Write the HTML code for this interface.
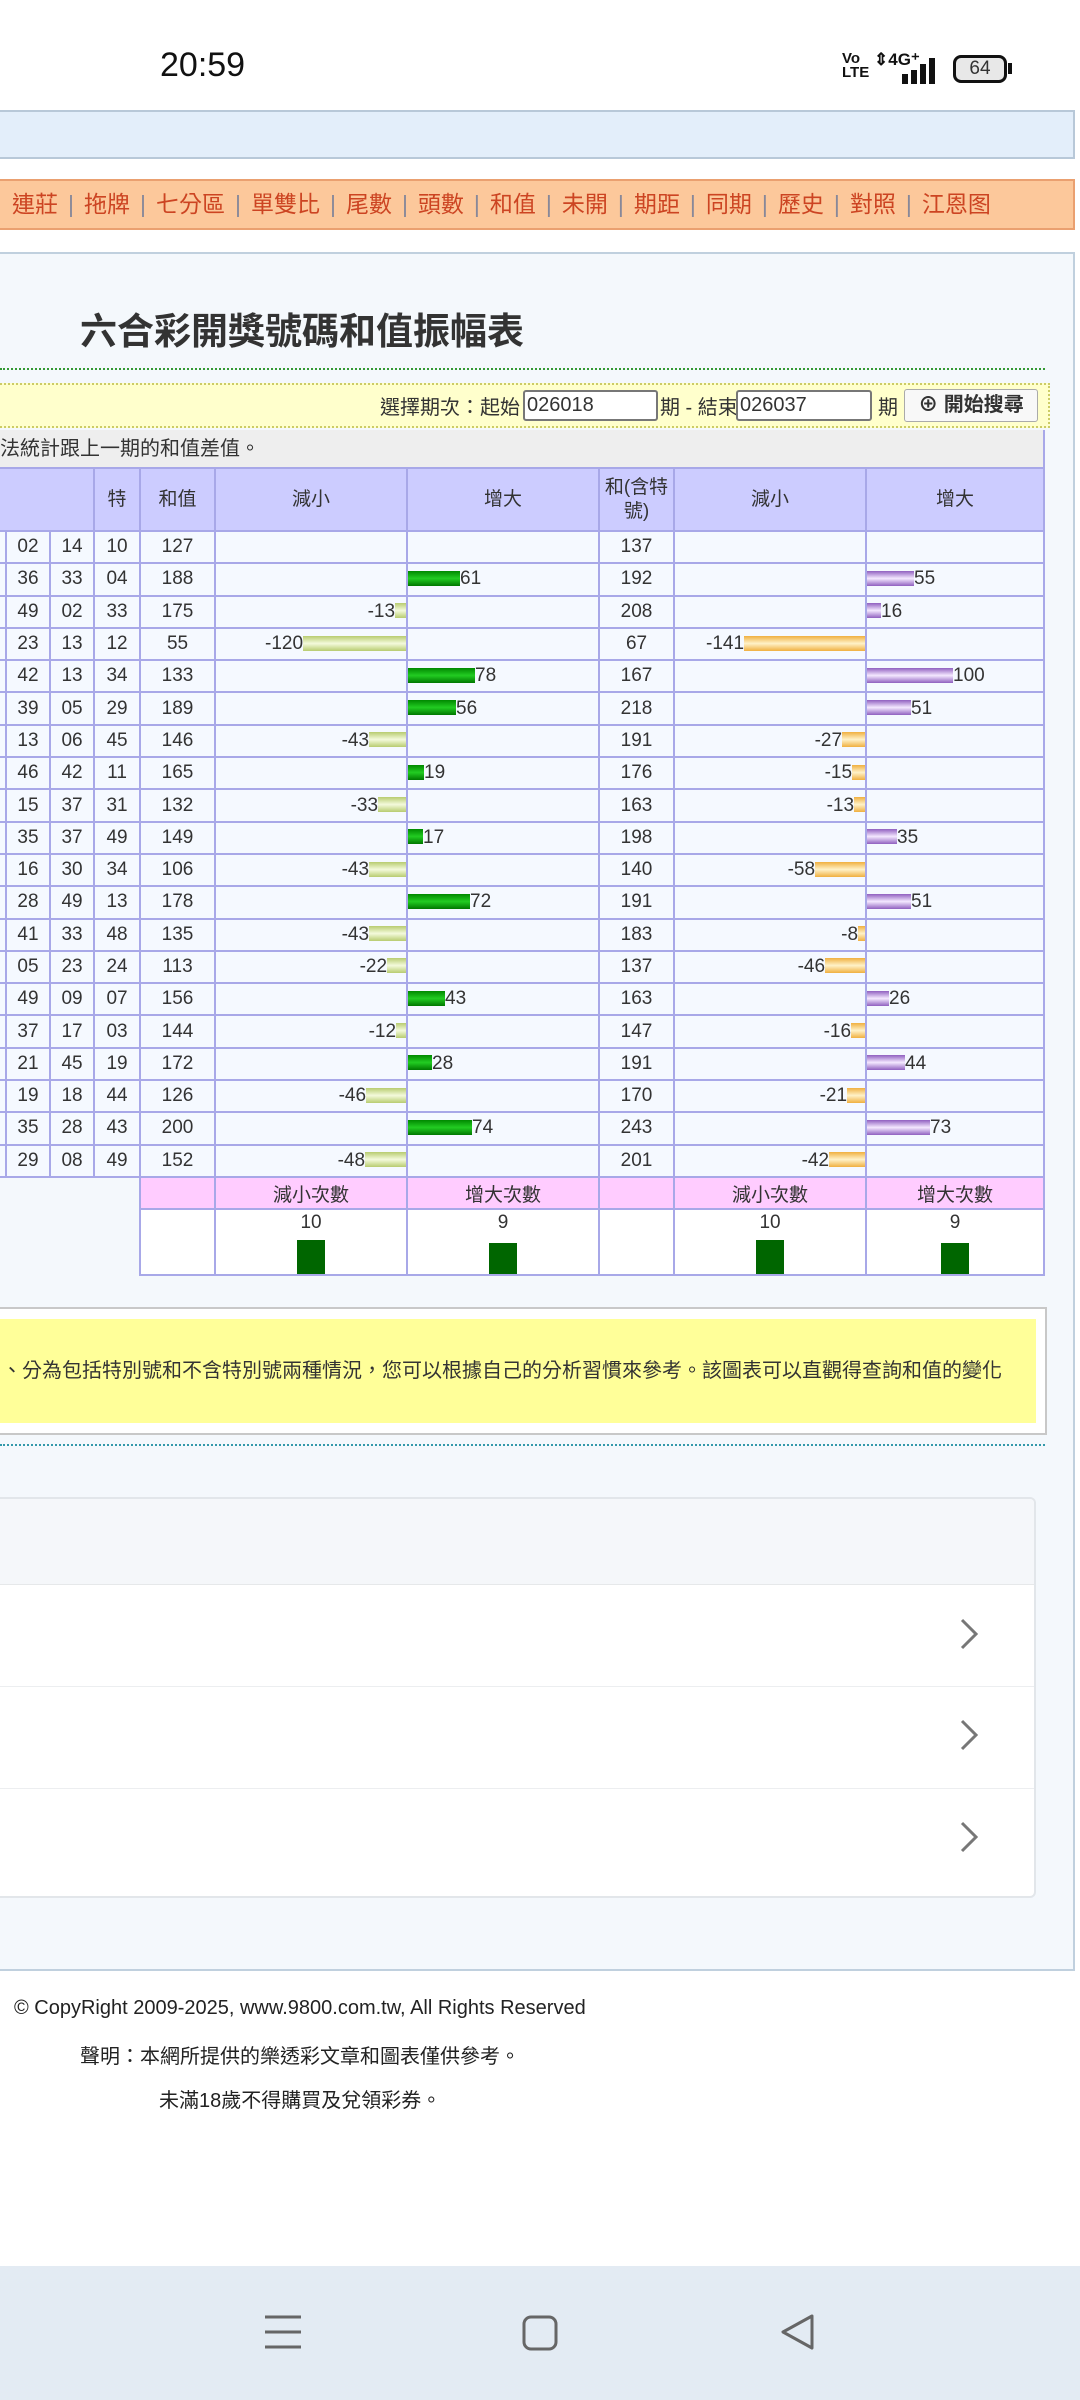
<!DOCTYPE html>
<html><head><meta charset="utf-8"><style>
*{margin:0;padding:0;box-sizing:border-box}
body{width:1080px;height:2400px;position:relative;overflow:hidden;background:#fff;font-family:"Liberation Sans","Noto Sans CJK TC",sans-serif;color:#333}
.abs{position:absolute}
table{border-collapse:collapse;table-layout:fixed;position:absolute;left:-39px;top:467px;width:1082px}
td{border:2px solid #a8a8e8;background:#f5f9ff;font-size:19px;text-align:center;height:32.3px;padding:0;white-space:nowrap;overflow:hidden}
tr.h td{background:#ccccff;height:63px;font-size:19px;line-height:24px}
td.d{text-align:right}
td.i{text-align:left}
.b{display:inline-block;height:15px;vertical-align:middle;position:relative;top:-1px}
.g{background:linear-gradient(#008800,#22cc22 50%,#007700)}
.y{background:linear-gradient(#b8cc70,#f4fadc 50%,#b8cc70)}
.o{background:linear-gradient(#f0b040,#fff2c8 50%,#f0b040)}
.p{background:linear-gradient(#9060c0,#f4e8ff 50%,#9060c0)}
tr.pk td.k{background:#ffccff}
.sq{display:inline-block;width:28px;background:#006600;vertical-align:bottom}
.nav span{color:#cc4422}
.nav i{color:#889;font-style:normal;margin:0 10px}
</style></head><body>
<div class="abs" style="left:160px;top:46px;font-size:34px;color:#111">20:59</div>
<div class="abs" style="left:842px;top:52px;font-size:15px;font-weight:bold;line-height:14px;color:#111">Vo<br>LTE</div>
<div class="abs" style="left:874px;top:50px;font-size:17px;font-weight:bold;color:#111">⇕4G⁺</div>
<svg class="abs" style="left:900px;top:54px" width="40" height="32"><rect x="2" y="20" width="6" height="10" fill="#111"/><rect x="11" y="16" width="6" height="14" fill="#111"/><rect x="20" y="10" width="6" height="20" fill="#111"/><rect x="29" y="4" width="6" height="26" fill="#111"/></svg>
<div class="abs" style="left:953px;top:55px;width:54px;height:28px;border:3px solid #111;border-radius:8px;background:#e8e8e8;font-size:19px;text-align:center;line-height:22px">64</div>
<div class="abs" style="left:1008px;top:63px;width:4px;height:11px;background:#111"></div>
<div class="abs" style="left:-5px;top:110px;width:1080px;height:49px;background:#e3eefa;border:2px solid #b8c8d8"></div>
<div class="abs nav" style="left:-5px;top:179px;width:1080px;height:51px;background:#fcc89b;border:2px solid #eaa070;font-size:23px;line-height:47px;padding-left:15px;white-space:nowrap"><span>連莊</span><i>|</i><span>拖牌</span><i>|</i><span>七分區</span><i>|</i><span>單雙比</span><i>|</i><span>尾數</span><i>|</i><span>頭數</span><i>|</i><span>和值</span><i>|</i><span>未開</span><i>|</i><span>期距</span><i>|</i><span>同期</span><i>|</i><span>歷史</span><i>|</i><span>對照</span><i>|</i><span>江恩图</span></div>
<div class="abs" style="left:-5px;top:252px;width:1080px;height:1719px;background:#f4f8fc;border:2px solid #c0d0de"></div>
<div class="abs" style="left:80px;top:301px;font-size:37px;font-weight:bold;color:#333">六合彩開獎號碼和值振幅表</div>
<div class="abs" style="left:0;top:368px;width:1045px;border-top:2px dotted #339933"></div>
<div class="abs" style="left:-5px;top:383px;width:1055px;height:45px;background:#ffffcc;border:2px dotted #cccc66"></div>
<div class="abs" style="left:380px;top:391px;font-size:20px;color:#333;white-space:nowrap">選擇期次：起始</div>
<div class="abs" style="left:523px;top:390px;width:135px;height:31px;background:#fff;border:2px solid #777;border-radius:3px;font-size:20px;line-height:27px;padding-left:2px">026018</div>
<div class="abs" style="left:660px;top:391px;font-size:20px;white-space:nowrap">期 - 結束</div>
<div class="abs" style="left:736px;top:390px;width:136px;height:31px;background:#fff;border:2px solid #777;border-radius:3px;font-size:20px;line-height:27px;padding-left:2px">026037</div>
<div class="abs" style="left:878px;top:391px;font-size:20px">期</div>
<div class="abs" style="left:904px;top:389px;width:134px;height:33px;background:#f8f8f8;border:1px solid #aaa;border-radius:3px;font-size:20px;font-weight:bold;line-height:31px;text-align:center">⊕ 開始搜尋</div>
<div class="abs" style="left:-5px;top:430px;width:1050px;height:38px;background:#eeeeee;border-right:2px solid #a8a8e8;font-size:20px;line-height:38px;padding-left:5px">法統計跟上一期的和值差值。</div>
<table>
<colgroup><col style="width:44px"><col style="width:44px"><col style="width:44px"><col style="width:46px"><col style="width:75px"><col style="width:192px"><col style="width:192px"><col style="width:75px"><col style="width:192px"><col style="width:178px"></colgroup>
<tr class="h"><td colspan="3"></td><td>特</td><td>和值</td><td>減小</td><td>增大</td><td>和(含特<br>號)</td><td>減小</td><td>增大</td></tr>
<tr><td>08</td><td>02</td><td>14</td><td>10</td><td>127</td><td></td><td></td><td>137</td><td></td><td></td></tr>
<tr><td>20</td><td>36</td><td>33</td><td>04</td><td>188</td><td></td><td class="i"><span class="b g" style="width:52px"></span>61</td><td>192</td><td></td><td class="i"><span class="b p" style="width:47px"></span>55</td></tr>
<tr><td>11</td><td>49</td><td>02</td><td>33</td><td>175</td><td class="d">-13<span class="b y" style="width:11px"></span></td><td></td><td>208</td><td></td><td class="i"><span class="b p" style="width:14px"></span>16</td></tr>
<tr><td>05</td><td>23</td><td>13</td><td>12</td><td>55</td><td class="d">-120<span class="b y" style="width:103px"></span></td><td></td><td>67</td><td class="d">-141<span class="b o" style="width:121px"></span></td><td></td></tr>
<tr><td>18</td><td>42</td><td>13</td><td>34</td><td>133</td><td></td><td class="i"><span class="b g" style="width:67px"></span>78</td><td>167</td><td></td><td class="i"><span class="b p" style="width:86px"></span>100</td></tr>
<tr><td>31</td><td>39</td><td>05</td><td>29</td><td>189</td><td></td><td class="i"><span class="b g" style="width:48px"></span>56</td><td>218</td><td></td><td class="i"><span class="b p" style="width:44px"></span>51</td></tr>
<tr><td>27</td><td>13</td><td>06</td><td>45</td><td>146</td><td class="d">-43<span class="b y" style="width:37px"></span></td><td></td><td>191</td><td class="d">-27<span class="b o" style="width:23px"></span></td><td></td></tr>
<tr><td>30</td><td>46</td><td>42</td><td>11</td><td>165</td><td></td><td class="i"><span class="b g" style="width:16px"></span>19</td><td>176</td><td class="d">-15<span class="b o" style="width:13px"></span></td><td></td></tr>
<tr><td>09</td><td>15</td><td>37</td><td>31</td><td>132</td><td class="d">-33<span class="b y" style="width:28px"></span></td><td></td><td>163</td><td class="d">-13<span class="b o" style="width:11px"></span></td><td></td></tr>
<tr><td>16</td><td>35</td><td>37</td><td>49</td><td>149</td><td></td><td class="i"><span class="b g" style="width:15px"></span>17</td><td>198</td><td></td><td class="i"><span class="b p" style="width:30px"></span>35</td></tr>
<tr><td>03</td><td>16</td><td>30</td><td>34</td><td>106</td><td class="d">-43<span class="b y" style="width:37px"></span></td><td></td><td>140</td><td class="d">-58<span class="b o" style="width:50px"></span></td><td></td></tr>
<tr><td>22</td><td>28</td><td>49</td><td>13</td><td>178</td><td></td><td class="i"><span class="b g" style="width:62px"></span>72</td><td>191</td><td></td><td class="i"><span class="b p" style="width:44px"></span>51</td></tr>
<tr><td>07</td><td>41</td><td>33</td><td>48</td><td>135</td><td class="d">-43<span class="b y" style="width:37px"></span></td><td></td><td>183</td><td class="d">-8<span class="b o" style="width:7px"></span></td><td></td></tr>
<tr><td>12</td><td>05</td><td>23</td><td>24</td><td>113</td><td class="d">-22<span class="b y" style="width:19px"></span></td><td></td><td>137</td><td class="d">-46<span class="b o" style="width:40px"></span></td><td></td></tr>
<tr><td>26</td><td>49</td><td>09</td><td>07</td><td>156</td><td></td><td class="i"><span class="b g" style="width:37px"></span>43</td><td>163</td><td></td><td class="i"><span class="b p" style="width:22px"></span>26</td></tr>
<tr><td>19</td><td>37</td><td>17</td><td>03</td><td>144</td><td class="d">-12<span class="b y" style="width:10px"></span></td><td></td><td>147</td><td class="d">-16<span class="b o" style="width:14px"></span></td><td></td></tr>
<tr><td>24</td><td>21</td><td>45</td><td>19</td><td>172</td><td></td><td class="i"><span class="b g" style="width:24px"></span>28</td><td>191</td><td></td><td class="i"><span class="b p" style="width:38px"></span>44</td></tr>
<tr><td>10</td><td>19</td><td>18</td><td>44</td><td>126</td><td class="d">-46<span class="b y" style="width:40px"></span></td><td></td><td>170</td><td class="d">-21<span class="b o" style="width:18px"></span></td><td></td></tr>
<tr><td>33</td><td>35</td><td>28</td><td>43</td><td>200</td><td></td><td class="i"><span class="b g" style="width:64px"></span>74</td><td>243</td><td></td><td class="i"><span class="b p" style="width:63px"></span>73</td></tr>
<tr><td>14</td><td>29</td><td>08</td><td>49</td><td>152</td><td class="d">-48<span class="b y" style="width:41px"></span></td><td></td><td>201</td><td class="d">-42<span class="b o" style="width:36px"></span></td><td></td></tr>
<tr class="pk"><td colspan="4" rowspan="2" style="background:#f4f8fc;border-left:none;border-bottom:none"></td><td class="k"></td><td class="k">減小次數</td><td class="k">增大次數</td><td class="k"></td><td class="k">減小次數</td><td class="k">增大次數</td></tr>
<tr><td style="height:66px;background:#fff"></td><td style="background:#fff;vertical-align:bottom;line-height:22px">10<br><span class="sq" style="height:34px;margin-top:6px"></span></td><td style="background:#fff;vertical-align:bottom;line-height:22px">9<br><span class="sq" style="height:31px;margin-top:9px"></span></td><td style="background:#fff"></td><td style="background:#fff;vertical-align:bottom;line-height:22px">10<br><span class="sq" style="height:34px;margin-top:6px"></span></td><td style="background:#fff;vertical-align:bottom;line-height:22px">9<br><span class="sq" style="height:31px;margin-top:9px"></span></td></tr>
</table>
<div class="abs" style="left:-5px;top:1307px;width:1052px;height:128px;background:#fff;border:2px solid #c8c8c8"></div>
<div class="abs" style="left:0;top:1319px;width:1036px;height:104px;background:#ffff99;font-size:20px;line-height:104px;white-space:nowrap;overflow:hidden;padding-left:2px">、分為包括特別號和不含特別號兩種情況，您可以根據自己的分析習慣來參考。該圖表可以直觀得查詢和值的變化</div>
<div class="abs" style="left:0;top:1444px;width:1045px;border-top:2px dotted #3399aa"></div>
<div class="abs" style="left:-10px;top:1497px;width:1046px;height:401px;background:#fff;border:2px solid #e2e6ea;border-radius:6px;overflow:hidden">
<div style="height:86px;background:#f5f7fa;border-bottom:1px solid #e6e8ea"></div>
<div style="height:102px;border-bottom:1px solid #eceef0"></div>
<div style="height:102px;border-bottom:1px solid #eceef0"></div>
</div>
<svg class="abs" style="left:958px;top:1617px" width="22" height="34"><path d="M4 3 L18 17 L4 31" fill="none" stroke="#777" stroke-width="3"/></svg>
<svg class="abs" style="left:958px;top:1718px" width="22" height="34"><path d="M4 3 L18 17 L4 31" fill="none" stroke="#777" stroke-width="3"/></svg>
<svg class="abs" style="left:958px;top:1820px" width="22" height="34"><path d="M4 3 L18 17 L4 31" fill="none" stroke="#777" stroke-width="3"/></svg>
<div class="abs" style="left:14px;top:1997px;font-size:20px;color:#222;white-space:nowrap">© CopyRight 2009-2025, www.9800.com.tw, All Rights Reserved</div>
<div class="abs" style="left:80px;top:2040px;font-size:20px;color:#222;white-space:nowrap">聲明：本網所提供的樂透彩文章和圖表僅供參考。</div>
<div class="abs" style="left:159px;top:2084px;font-size:20px;color:#222;white-space:nowrap">未滿18歲不得購買及兌領彩券。</div>
<div class="abs" style="left:0;top:2266px;width:1080px;height:134px;background:#e3ebf3"></div>
<svg class="abs" style="left:262px;top:2312px" width="42" height="40"><path d="M3 5H39M3 20H39M3 35H39" stroke="#666" stroke-width="3"/></svg>
<svg class="abs" style="left:521px;top:2314px" width="38" height="38"><rect x="3" y="3" width="32" height="32" rx="7" fill="none" stroke="#666" stroke-width="3"/></svg>
<svg class="abs" style="left:778px;top:2312px" width="38" height="40"><path d="M34 4 L5 20 L34 36 Z" fill="none" stroke="#666" stroke-width="3" stroke-linejoin="round"/></svg>
</body></html>
